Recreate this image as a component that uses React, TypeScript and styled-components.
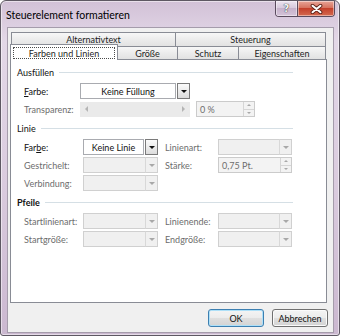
import React from 'react';
import styled, { createGlobalStyle } from 'styled-components';

const GlobalStyle = createGlobalStyle`
  html, body { margin: 0; padding: 0; background: #ffffff; }
  * { box-sizing: border-box; }
`;

const Window = styled.div`
  width: 340px;
  height: 336px;
  display: flex;
  flex-direction: column;
  border: 1px solid #5e5863;
  border-radius: 6px 6px 3px 3px;
  background: linear-gradient(180deg, #d2c1d7 0%, #e3d8e7 12%, #dacbde 55%, #cbb8d0 100%);
  box-shadow: inset 0 0 0 1px rgba(255, 255, 255, 0.5);
  font-family: Lato, "Noto Sans", sans-serif;
  font-size: 9px;
  color: #1e1e1e;
  overflow: hidden;
`;

const TitleBar = styled.div`
  height: 26px;
  flex: none;
  display: flex;
  align-items: flex-start;
  padding: 0 4px 0 5px;
`;

const Title = styled.div`
  flex: 1;
  margin-top: 7px;
  font-size: 10.5px;
  line-height: 14px;
  color: #000;
`;

const CaptionGroup = styled.div`
  display: flex;
  height: 16px;
  border: 1px solid #5a4b5e;
  border-top: none;
  border-radius: 0 0 4px 4px;
  overflow: hidden;
`;

const CaptionButton = styled.div<{ $variant: 'help' | 'close' }>`
  width: ${(p) => (p.$variant === 'help' ? 21 : 37)}px;
  display: flex;
  align-items: center;
  justify-content: center;
  box-shadow: inset 0 0 0 1px rgba(255, 255, 255, 0.45);
  background: ${(p) =>
    p.$variant === 'help'
      ? 'linear-gradient(180deg, #ece3ef 0%, #d8cadd 45%, #c6b2cb 50%, #d4c3d8 100%)'
      : 'linear-gradient(180deg, #e8a598 0%, #d6725f 45%, #c4402b 50%, #d46a50 100%)'};
  & + & {
    border-left: 1px solid #5a4b5e;
  }
`;

const HelpGlyph = styled.span`
  font-family: "DejaVu Sans", sans-serif;
  font-size: 10px;
  font-weight: 700;
  color: #f4f4f4;
  text-shadow: 0 0 1px #3a3a3a, 0 0 1px #3a3a3a;
  line-height: 1;
`;

const Client = styled.div`
  flex: 1;
  margin: 0 5px 2px 6px;
  background: #f0f0f0;
  border: 1px solid #a59cab;
  display: flex;
  flex-direction: column;
  padding: 4px 6px 5px 2px;
`;

const TabRow = styled.div<{ $front?: boolean }>`
  display: flex;
  height: 14px;
  flex: none;
  align-items: flex-start;
  padding-left: ${(p) => (p.$front ? 0 : 1)}px;
  margin-bottom: ${(p) => (p.$front ? -1 : 0)}px;
`;

const Tab = styled.div<{ $w: number; $selected?: boolean; $tall?: boolean }>`
  width: ${(p) => p.$w}px;
  height: ${(p) => (p.$selected ? 16 : p.$tall ? 14 : 13)}px;
  margin-top: ${(p) => (p.$selected ? -2 : 0)}px;
  display: flex;
  align-items: center;
  justify-content: center;
  border: 1px solid #898c95;
  border-bottom: none;
  background: ${(p) => (p.$selected ? '#ffffff' : 'linear-gradient(180deg, #f7f7f7 0%, #ececec 50%, #e2e2e2 100%)')};
  color: #1e1e1e;
  line-height: 11px;
  position: relative;
  z-index: ${(p) => (p.$selected ? 2 : 0)};
  & + & {
    margin-left: -1px;
  }
`;

const FocusLabel = styled.span`
  flex: 1;
  align-self: stretch;
  margin: 2px 2px 1px 2px;
  border: 1px dotted #4a4a4a;
  display: flex;
  align-items: center;
  justify-content: center;
`;

const Panel = styled.div`
  flex: 1;
  background: #ffffff;
  border: 1px solid #898c95;
  padding: 3px 33px 0 6px;
  display: flex;
  flex-direction: column;
`;

const Section = styled.div`
  display: flex;
  flex-direction: column;
  & + & {
    margin-top: 1px;
  }
`;

const SectionHeader = styled.div<{ $bold?: boolean }>`
  display: flex;
  align-items: center;
  height: 18px;
  margin-bottom: 1px;
  font-weight: ${(p) => (p.$bold ? 700 : 400)};
  color: #111;
  &::after {
    content: '';
    flex: 1;
    height: 1px;
    margin-left: 5px;
    background: #d5dfe5;
  }
`;

const Row = styled.div`
  display: flex;
  align-items: center;
  height: 18px;
  padding-left: 7px;
`;

const Label = styled.span<{ $w: number; $disabled?: boolean; $gap?: number }>`
  width: ${(p) => p.$w}px;
  margin-left: ${(p) => p.$gap ?? 0}px;
  flex: none;
  color: ${(p) => (p.$disabled ? '#6d6d6d' : '#111')};
  white-space: nowrap;
`;

const Mnemonic = styled.span`
  text-decoration: underline;
  text-underline-offset: 1px;
`;

const Combo = styled.div<{ $w: number; $disabled?: boolean }>`
  width: ${(p) => p.$w}px;
  height: 16px;
  flex: none;
  display: flex;
  gap: ${(p) => (p.$disabled ? 0 : 1)}px;
`;

const ComboField = styled.div<{ $disabled?: boolean }>`
  flex: 1;
  border: 1px solid ${(p) => (p.$disabled ? '#d0d0d0' : '#a9abb0')};
  background: ${(p) => (p.$disabled ? '#f0f0f0' : '#ffffff')};
  display: flex;
  align-items: center;
  justify-content: center;
  color: #111;
`;

const ComboArrow = styled.div<{ $disabled?: boolean }>`
  width: 13px;
  flex: none;
  display: flex;
  align-items: center;
  justify-content: center;
  border: 1px solid ${(p) => (p.$disabled ? '#d0d0d0' : '#7a7a7a')};
  ${(p) => (p.$disabled ? 'border-left: 1px solid #d8d8d8; margin-left: -1px;' : '')}
  background: ${(p) => (p.$disabled ? '#f0f0f0' : 'linear-gradient(180deg, #fbfbfb 0%, #ececec 50%, #dcdcdc 100%)')};
`;

const TriDown = styled.span<{ $color: string; $size?: number }>`
  width: 0;
  height: 0;
  border-left: ${(p) => p.$size ?? 3}px solid transparent;
  border-right: ${(p) => p.$size ?? 3}px solid transparent;
  border-top: ${(p) => p.$size ?? 3}px solid ${(p) => p.$color};
`;

const TriUp = styled.span<{ $color: string }>`
  width: 0;
  height: 0;
  border-left: 2px solid transparent;
  border-right: 2px solid transparent;
  border-bottom: 2px solid ${(p) => p.$color};
`;

const TriSide = styled.span<{ $dir: 'left' | 'right' }>`
  width: 0;
  height: 0;
  border-top: 3px solid transparent;
  border-bottom: 3px solid transparent;
  ${(p) => (p.$dir === 'left' ? 'border-right' : 'border-left')}: 3px solid #b4b4b4;
`;

const Slider = styled.div<{ $w: number }>`
  width: ${(p) => p.$w}px;
  height: 15px;
  flex: none;
  background: #eaeaea;
  display: flex;
  align-items: center;
  justify-content: space-between;
  padding: 0 5px;
`;

const Spin = styled.div<{ $w: number; $gap?: number }>`
  width: ${(p) => p.$w}px;
  height: 16px;
  flex: none;
  margin-left: ${(p) => p.$gap ?? 0}px;
  display: flex;
  border: 1px solid #cbcbcb;
  background: #f3f3f3;
`;

const SpinText = styled.span`
  flex: 1;
  display: flex;
  align-items: center;
  padding-left: 3px;
  color: #6d6d6d;
`;

const SpinButtons = styled.div`
  width: 11px;
  flex: none;
  display: flex;
  flex-direction: column;
  border-left: 1px solid #d6d6d6;
`;

const SpinPart = styled.div`
  flex: 1;
  display: flex;
  align-items: center;
  justify-content: center;
  & + & {
    border-top: 1px solid #d6d6d6;
  }
`;

const ButtonRow = styled.div`
  display: flex;
  justify-content: flex-end;
  gap: 8px;
  margin-top: 6px;
  margin-right: -1px;
  height: 18px;
  flex: none;
`;

const DialogButton = styled.button<{ $default?: boolean }>`
  width: 56px;
  height: 18px;
  padding: 0;
  font: inherit;
  color: #111;
  border-radius: 3px;
  border: 1px solid ${(p) => (p.$default ? '#3c7fb1' : '#707070')};
  box-shadow: inset 0 0 0 1px ${(p) => (p.$default ? '#aee0f8' : '#fbfbfb')};
  background: linear-gradient(180deg, #f4f4f4 0%, #ececec 48%, #dfdfdf 52%, #d3d3d3 100%);
`;

type ComboProps = { w: number; value?: string; disabled?: boolean };

const DropDown = ({ w, value, disabled }: ComboProps) => (
  <Combo $w={w} $disabled={disabled}>
    <ComboField $disabled={disabled}>{value}</ComboField>
    <ComboArrow $disabled={disabled}>
      <TriDown $color={disabled ? '#a8a8a8' : '#111'} />
    </ComboArrow>
  </Combo>
);

const Spinner = ({ w, value, gap }: { w: number; value: string; gap?: number }) => (
  <Spin $w={w} $gap={gap}>
    <SpinText>{value}</SpinText>
    <SpinButtons>
      <SpinPart>
        <TriUp $color="#a8a8a8" />
      </SpinPart>
      <SpinPart>
        <TriDown $color="#a8a8a8" $size={2} />
      </SpinPart>
    </SpinButtons>
  </Spin>
);

const CloseIcon = () => (
  <svg width="13" height="10" viewBox="0 0 13 10">
    <path d="M2.5 1.8 L10.5 8.2 M10.5 1.8 L2.5 8.2" stroke="#5b2118" strokeWidth="3.8" strokeLinecap="round" />
    <path d="M2.5 1.8 L10.5 8.2 M10.5 1.8 L2.5 8.2" stroke="#ffffff" strokeWidth="2.1" strokeLinecap="round" />
  </svg>
);

export default function App() {
  return (
    <>
      <GlobalStyle />
      <Window>
        <TitleBar>
          <Title>Steuerelement formatieren</Title>
          <CaptionGroup>
            <CaptionButton $variant="help">
              <HelpGlyph>?</HelpGlyph>
            </CaptionButton>
            <CaptionButton $variant="close">
              <CloseIcon />
            </CaptionButton>
          </CaptionGroup>
        </TitleBar>
        <Client>
          <TabRow>
            <Tab $w={165} $tall>Alternativtext</Tab>
            <Tab $w={151} $tall>Steuerung</Tab>
          </TabRow>
          <TabRow $front>
            <Tab $w={108} $selected>
              <FocusLabel>Farben und Linien</FocusLabel>
            </Tab>
            <Tab $w={61}>Größe</Tab>
            <Tab $w={62}>Schutz</Tab>
            <Tab $w={88}>Eigenschaften</Tab>
          </TabRow>
          <Panel>
            <Section>
              <SectionHeader>Ausfüllen</SectionHeader>
              <Row>
                <Label $w={56}>
                  <Mnemonic>F</Mnemonic>arbe:
                </Label>
                <DropDown w={110} value="Keine Füllung" />
              </Row>
              <Row>
                <Label $w={56} $disabled>
                  Transparenz:
                </Label>
                <Slider $w={110}>
                  <TriSide $dir="left" />
                  <TriSide $dir="right" />
                </Slider>
                <Spinner w={59} value="0 %" gap={6} />
              </Row>
            </Section>
            <Section>
              <SectionHeader>Linie</SectionHeader>
              <Row>
                <Label $w={59}>
                  Far<Mnemonic>b</Mnemonic>e:
                </Label>
                <DropDown w={75} value="Keine Linie" />
                <Label $w={53} $gap={7} $disabled>
                  Linienart:
                </Label>
                <DropDown w={74} disabled />
              </Row>
              <Row>
                <Label $w={59} $disabled>
                  Gestrichelt:
                </Label>
                <DropDown w={75} disabled />
                <Label $w={53} $gap={7} $disabled>
                  Stärke:
                </Label>
                <Spinner w={74} value="0,75 Pt." />
              </Row>
              <Row>
                <Label $w={59} $disabled>
                  Verbindung:
                </Label>
                <DropDown w={75} disabled />
              </Row>
            </Section>
            <Section>
              <SectionHeader $bold>Pfeile</SectionHeader>
              <Row>
                <Label $w={59} $disabled>
                  Startlinienart:
                </Label>
                <DropDown w={75} disabled />
                <Label $w={53} $gap={7} $disabled>
                  Linienende:
                </Label>
                <DropDown w={74} disabled />
              </Row>
              <Row>
                <Label $w={59} $disabled>
                  Startgröße:
                </Label>
                <DropDown w={75} disabled />
                <Label $w={53} $gap={7} $disabled>
                  Endgröße:
                </Label>
                <DropDown w={74} disabled />
              </Row>
            </Section>
          </Panel>
          <ButtonRow>
            <DialogButton $default>OK</DialogButton>
            <DialogButton>Abbrechen</DialogButton>
          </ButtonRow>
        </Client>
      </Window>
    </>
  );
}
